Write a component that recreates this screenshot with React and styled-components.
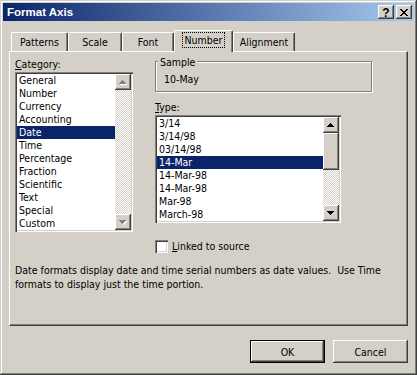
import React from "react";
import styled, { createGlobalStyle, css } from "styled-components";

const FONT = `"DejaVu Sans Condensed", "Liberation Sans", sans-serif`;
const FACE = "#D4D0C8";

const GlobalStyle = createGlobalStyle`
  html, body { margin: 0; padding: 0; background: ${FACE}; }
  body { font-family: ${FONT}; font-size: 10.5px; color: #000; }
  * { box-sizing: border-box; }
`;

const raised = css`
  box-shadow: inset -1px -1px #404040, inset 1px 1px #ffffff,
    inset -2px -2px #808080, inset 2px 2px ${FACE};
`;

const sunken = css`
  box-shadow: inset 1px 1px #808080, inset 2px 2px #404040,
    inset -1px -1px #ffffff, inset -2px -2px ${FACE};
`;

const Window = styled.div`
  width: 417px;
  height: 375px;
  padding: 3px;
  background: ${FACE};
  display: flex;
  flex-direction: column;
  box-shadow: inset -1px -1px #404040, inset 1px 1px ${FACE},
    inset -2px -2px #808080, inset 2px 2px #ffffff;
`;

const TitleBar = styled.div`
  height: 18px;
  display: flex;
  align-items: center;
  gap: 2px;
  padding: 0 2px 0 2px;
  background: linear-gradient(to right, #0a246a, #a6caf0);
`;

const Title = styled.span`
  flex: 1;
  color: #fff;
  font-family: "Liberation Sans", sans-serif;
  font-weight: bold;
  font-size: 11.5px;
  padding-left: 2px;
`;

const CaptionButton = styled.div`
  width: 16px;
  height: 14px;
  background: ${FACE};
  display: flex;
  align-items: center;
  justify-content: center;
  font-family: "Liberation Sans", sans-serif;
  font-weight: bold;
  font-size: 12px;
  line-height: 14px;
  padding-top: 1px;
  ${raised};
`;

const Body = styled.div`
  flex: 1;
  display: flex;
  flex-direction: column;
  padding: 9px 6px 9px 6px;
`;

const TabRow = styled.div`
  height: 21px;
  display: flex;
  align-items: flex-end;
  padding-left: 2px;
  position: relative;
  z-index: 2;
`;

const Tab = styled.div`
  width: ${(p) => p.$w}px;
  height: ${(p) => (p.$active ? 22 : 19)}px;
  margin-bottom: ${(p) => (p.$active ? -1 : 0)}px;
  background: ${FACE};
  border-top: 1px solid #fff;
  border-left: 1px solid #fff;
  border-right: 1px solid #404040;
  border-radius: 2px 2px 0 0;
  box-shadow: inset -1px 0 #808080;
  display: flex;
  align-items: center;
  justify-content: center;
  padding-bottom: ${(p) => (p.$active ? 3 : 0)}px;
  line-height: 13px;
`;

const Focus = styled.span`
  outline: 1px dotted #000;
  outline-offset: 0;
  padding: 0 2px;
  line-height: 14px;
`;

const Panel = styled.div`
  height: 275px;
  border-top: 1px solid #fff;
  border-left: 1px solid #fff;
  border-right: 1px solid #404040;
  border-bottom: 1px solid #404040;
  box-shadow: inset -1px -1px #808080;
  padding: 6px 5px 0 5px;
  position: relative;
  z-index: 1;
`;

const Columns = styled.div`
  display: grid;
  grid-template-columns: 118px 186px;
  column-gap: 22px;
  align-items: start;
`;

const Column = styled.div`
  display: flex;
  flex-direction: column;
`;

const Label = styled.div`
  line-height: 13px;
  height: 13px;
  margin-top: ${(p) => p.$mt || 0}px;
  margin-bottom: 1px;
  white-space: nowrap;
`;

const GroupBox = styled.div`
  position: relative;
  width: 217px;
  height: 31px;
  margin-top: 3px;
  border: 1px solid #808080;
  box-shadow: inset 1px 1px #fff, 1px 1px #fff;
  padding: 11px 0 0 8px;
  line-height: 13px;
`;

const Legend = styled.span`
  position: absolute;
  top: -6px;
  left: 2px;
  padding: 0 2px;
  background: ${FACE};
  line-height: 13px;
`;

const ListBox = styled.div`
  display: flex;
  width: ${(p) => p.$w}px;
  height: ${(p) => p.$h}px;
  padding: 2px;
  background: #fff;
  ${sunken};
`;

const Items = styled.div`
  flex: 1;
  overflow: hidden;
`;

const Item = styled.div`
  height: 13px;
  line-height: 13px;
  padding-left: 2px;
  white-space: nowrap;
  background: ${(p) => (p.$selected ? "#0a246a" : "transparent")};
  color: ${(p) => (p.$selected ? "#fff" : "#000")};
`;

const ScrollBar = styled.div`
  width: 16px;
  display: flex;
  flex-direction: column;
`;

const ScrollButton = styled.div`
  width: 16px;
  height: ${(p) => p.$h || 16}px;
  background: ${FACE};
  display: flex;
  align-items: center;
  justify-content: center;
  ${raised};
`;

const Track = styled.div`
  flex: 1;
  background-color: #fff;
  background-image: conic-gradient(
    #fff 0 25%,
    ${FACE} 0 50%,
    #fff 0 75%,
    ${FACE} 0
  );
  background-size: 2px 2px;
`;

const CheckRow = styled.label`
  display: flex;
  align-items: center;
  gap: 4px;
  margin-top: 17px;
  height: 13px;
  line-height: 13px;
`;

const CheckBox = styled.span`
  width: 13px;
  height: 13px;
  background: #fff;
  ${sunken};
`;

const Description = styled.p`
  margin: 10px 0 0 0;
  line-height: 14px;
`;

const ButtonRow = styled.div`
  display: flex;
  justify-content: flex-end;
  gap: 8px;
  margin-top: 14px;
`;

const PushButton = styled.div`
  width: 75px;
  height: 23px;
  display: flex;
  align-items: center;
  justify-content: center;
  background: ${FACE};
  ${(p) =>
    p.$default
      ? css`
          box-shadow: inset 0 0 0 1px #000, inset -2px -2px #404040,
            inset 2px 2px #fff, inset -3px -3px #808080;
        `
      : raised};
`;

function Arrow({ down, disabled }) {
  const rows = [
    [3, 1],
    [2, 3],
    [1, 5],
    [0, 7],
  ];
  const shape = (dx, dy, fill) =>
    rows.map(([x, w], i) => (
      <rect
        key={`${fill}${i}`}
        x={x + dx}
        y={(down ? 3 - i : i) + dy}
        width={w}
        height={1}
        fill={fill}
      />
    ));
  return (
    <svg width="8" height="5" shapeRendering="crispEdges">
      {disabled && shape(1, 1, "#fff")}
      {shape(0, 0, disabled ? "#808080" : "#000")}
    </svg>
  );
}

function CloseGlyph() {
  const cells = [];
  for (let i = 0; i < 7; i++) {
    cells.push(<rect key={`a${i}`} x={i} y={i} width={2} height={1} />);
    cells.push(<rect key={`b${i}`} x={6 - i} y={i} width={2} height={1} />);
  }
  return (
    <svg width="8" height="7" shapeRendering="crispEdges" fill="#000">
      {cells}
    </svg>
  );
}

function List({ width, items, selected, thumb, disabled }) {
  return (
    <ListBox $w={width} $h={items.length * 13 + 4}>
      <Items>
        {items.map((t, i) => (
          <Item key={t + i} $selected={i === selected}>
            {t}
          </Item>
        ))}
      </Items>
      <ScrollBar>
        <ScrollButton>
          <Arrow disabled={disabled} />
        </ScrollButton>
        {thumb && <ScrollButton $h={thumb} />}
        <Track />
        <ScrollButton>
          <Arrow down disabled={disabled} />
        </ScrollButton>
      </ScrollBar>
    </ListBox>
  );
}

const categories = [
  "General",
  "Number",
  "Currency",
  "Accounting",
  "Date",
  "Time",
  "Percentage",
  "Fraction",
  "Scientific",
  "Text",
  "Special",
  "Custom",
];

const types = [
  "3/14",
  "3/14/98",
  "03/14/98",
  "14-Mar",
  "14-Mar-98",
  "14-Mar-98",
  "Mar-98",
  "March-98",
];

const tabs = [
  { name: "Patterns", w: 57 },
  { name: "Scale", w: 54 },
  { name: "Font", w: 52 },
  { name: "Number", w: 59, active: true },
  { name: "Alignment", w: 62 },
];

export default function App() {
  return (
    <>
      <GlobalStyle />
      <Window>
        <TitleBar>
          <Title>Format Axis</Title>
          <CaptionButton>?</CaptionButton>
          <CaptionButton>
            <CloseGlyph />
          </CaptionButton>
        </TitleBar>
        <Body>
          <TabRow>
            {tabs.map((t) => (
              <Tab key={t.name} $w={t.w} $active={t.active}>
                {t.active ? <Focus>{t.name}</Focus> : t.name}
              </Tab>
            ))}
          </TabRow>
          <Panel>
            <Columns>
              <Column>
                <Label>
                  <u>C</u>ategory:
                </Label>
                <List width={118} items={categories} selected={4} disabled />
              </Column>
              <Column>
                <GroupBox>
                  <Legend>Sample</Legend>
                  10-May
                </GroupBox>
                <Label $mt={9}>
                  <u>T</u>ype:
                </Label>
                <List width={186} items={types} selected={3} thumb={37} />
                <CheckRow>
                  <CheckBox />
                  <span>
                    <u>L</u>inked to source
                  </span>
                </CheckRow>
              </Column>
            </Columns>
            <Description>
              Date formats display date and time serial numbers as date
              values.{"\u00a0 "}Use Time
              <br />
              formats to display just the time portion.
            </Description>
          </Panel>
          <ButtonRow>
            <PushButton $default>OK</PushButton>
            <PushButton>Cancel</PushButton>
          </ButtonRow>
        </Body>
      </Window>
    </>
  );
}
